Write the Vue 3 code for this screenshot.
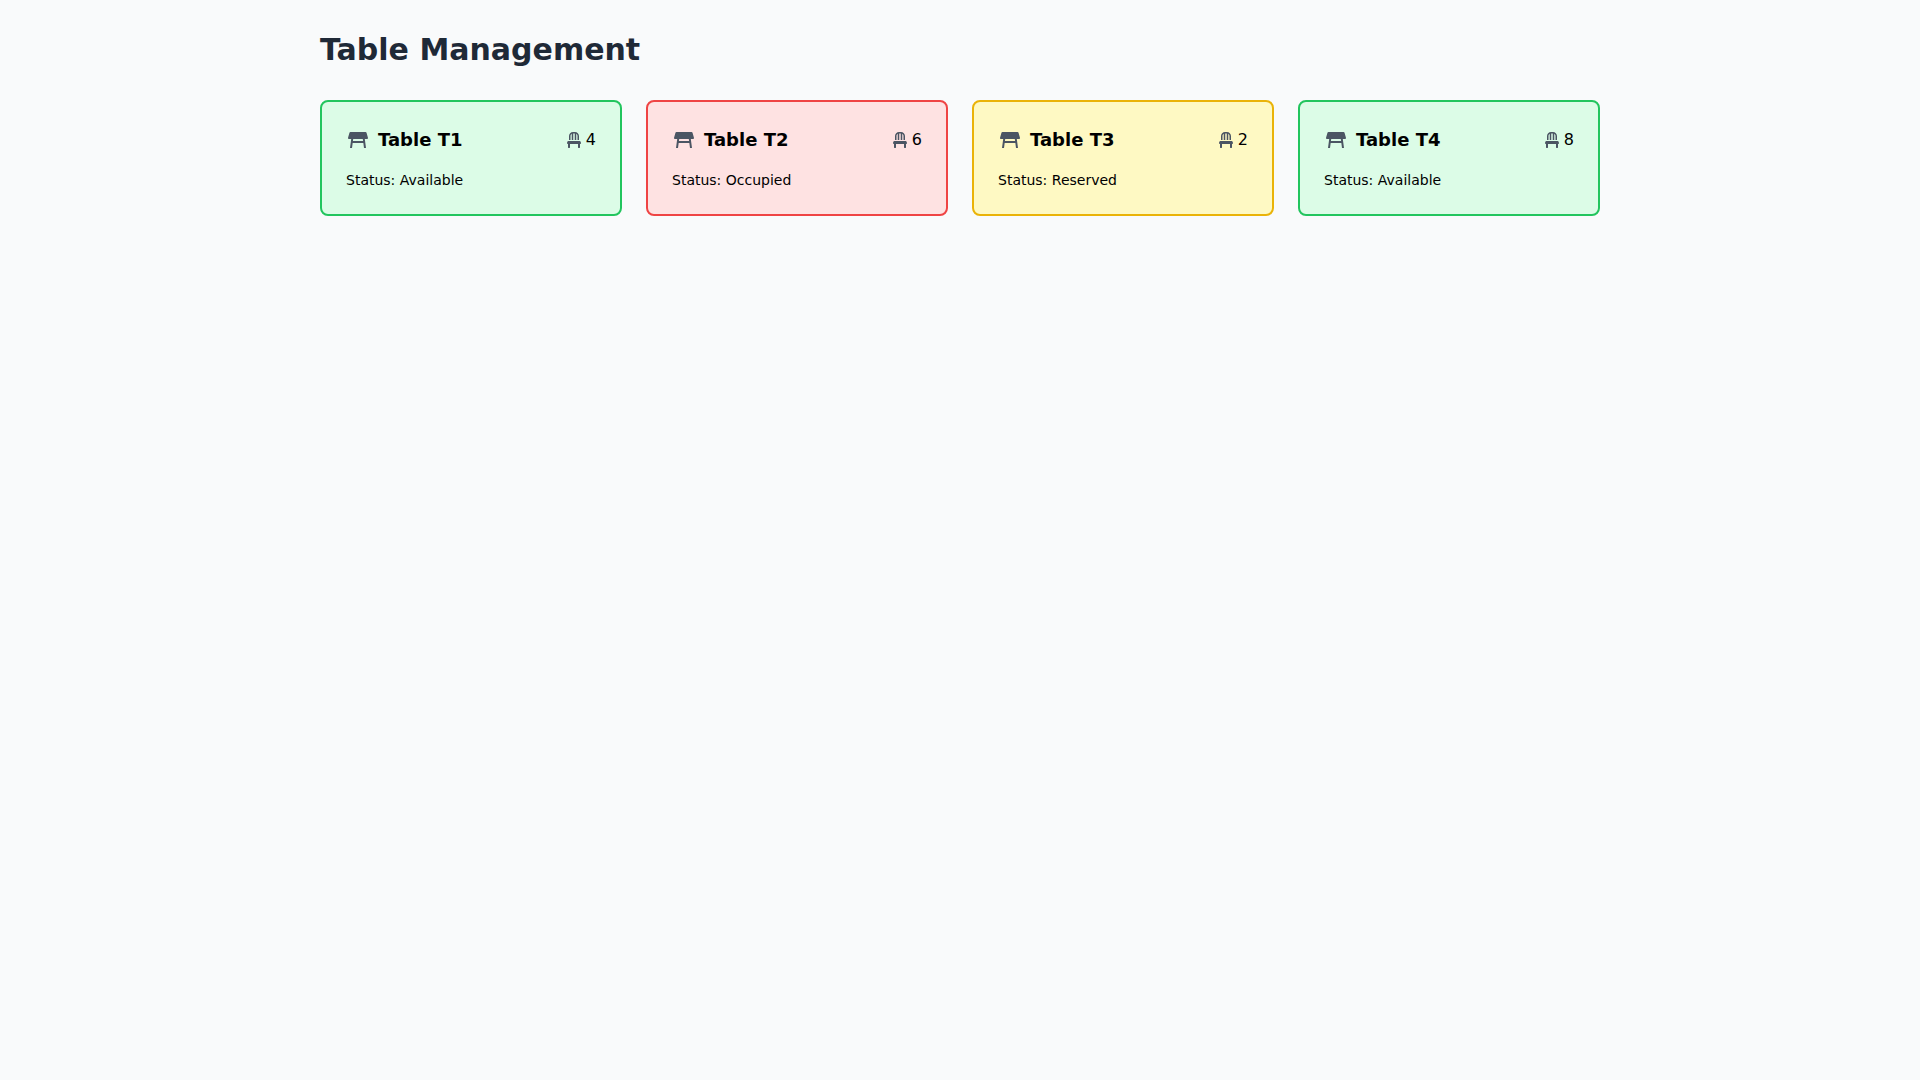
<script setup>
const tables = [
  { id: 'T1', seats: 4, status: 'Available', tone: 'available' },
  { id: 'T2', seats: 6, status: 'Occupied', tone: 'occupied' },
  { id: 'T3', seats: 2, status: 'Reserved', tone: 'reserved' },
  { id: 'T4', seats: 8, status: 'Available', tone: 'available' },
]
</script>

<template>
  <main class="page">
    <h1 class="title">Table Management</h1>
    <div class="grid">
      <article v-for="t in tables" :key="t.id" class="card" :class="t.tone">
        <div class="head">
          <div class="name">
            <svg class="table-icon" viewBox="0 0 24 24" fill="#4b5563">
              <path d="M21.96 9.73l-1.43-5c-.12-.43-.51-.73-.96-.73H4.43c-.45 0-.84.3-.96.73l-1.43 5c-.18.63.3 1.27.96 1.27h2.2L4 20h2l.67-5h10.67l.66 5h2l-1.2-9H21c.66 0 1.14-.64.96-1.27zM6.93 13l.27-2h9.6l.27 2H6.93z" />
            </svg>
            <h2>Table {{ t.id }}</h2>
          </div>
          <div class="seats">
            <svg class="chair-icon" viewBox="0 0 448 512" fill="#4b5563">
              <path d="M112 128c0-29.5 16.2-55 40-68.9V256h48V48h48v208h48V59.1c23.8 13.9 40 39.4 40 68.9v128h48V128C384 57.3 326.7 0 256 0h-64C121.3 0 64 57.3 64 128v128h48zm334.3 213.9l-10.7-32c-4.4-13.1-16.6-21.9-30.4-21.9H42.7c-13.8 0-26 8.8-30.4 21.9l-10.7 32C-5.2 362.6 10.2 384 32 384v112c0 8.8 7.2 16 16 16h32c8.8 0 16-7.2 16-16V384h256v112c0 8.8 7.2 16 16 16h32c8.8 0 16-7.2 16-16V384c21.8 0 37.2-21.4 30.3-42.1z" />
            </svg>
            <span>{{ t.seats }}</span>
          </div>
        </div>
        <p class="status">Status: {{ t.status }}</p>
      </article>
    </div>
  </main>
</template>

<style>
html, body { background: #f9fafb; }
body { min-height: 1080px; }
</style>

<style scoped>
.page {
  width: 1280px;
  margin: 0 auto;
  padding-top: 32px;
  font-family: "DejaVu Sans", sans-serif;
  color: #000;
}
.title {
  margin: 0 0 32px;
  font-size: 30px;
  line-height: 36px;
  font-weight: 700;
  color: #1f2937;
}
.grid {
  display: grid;
  grid-template-columns: repeat(4, 1fr);
  gap: 24px;
}
.card {
  border: 2px solid;
  border-radius: 8px;
  padding: 24px;
}
.available { background: #dcfce7; border-color: #22c55e; }
.occupied { background: #fee2e2; border-color: #ef4444; }
.reserved { background: #fef9c3; border-color: #eab308; }
.head {
  display: flex;
  align-items: center;
  justify-content: space-between;
  margin-bottom: 16px;
}
.name {
  display: flex;
  align-items: center;
  gap: 8px;
}
.name h2 {
  margin: 0;
  font-size: 18px;
  line-height: 28px;
  font-weight: 700;
}
.table-icon { width: 24px; height: 24px; display: block; }
.seats {
  display: flex;
  align-items: center;
  gap: 5.09px;
  font-size: 16px;
  line-height: 24px;
}
.chair-icon { width: 14px; height: 16px; display: block; }
.status {
  margin: 0;
  font-size: 14px;
  line-height: 20px;
}
</style>
